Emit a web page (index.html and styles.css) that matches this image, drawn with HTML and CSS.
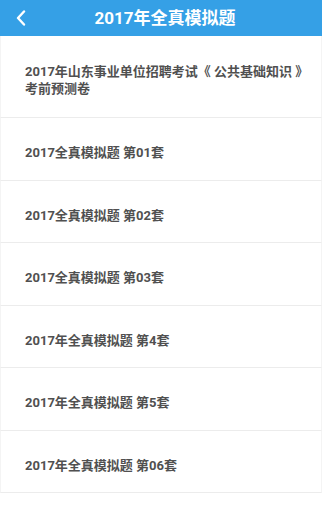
FILE: index.html
```html
<!DOCTYPE html>
<html lang="zh">
<head>
<meta charset="utf-8">
<title>2017年全真模拟题</title>
<link rel="stylesheet" href="styles.css">
</head>
<body>
<header class="topbar">
  <span class="back" aria-label="返回">
    <svg width="10" height="16" viewBox="0 0 10 16"><path d="M8 1.5 L2 8 L8 14.5" fill="none" stroke="#fff" stroke-width="2.4" stroke-linecap="round" stroke-linejoin="round"/></svg>
  </span>
  <h1 class="title">2017年全真模拟题</h1>
</header>
<ul class="list">
  <li class="item item-first">2017年山东事业单位招聘考试《 公共基础知识 》<br>考前预测卷</li>
  <li class="item">2017全真模拟题 第01套</li>
  <li class="item">2017全真模拟题 第02套</li>
  <li class="item">2017全真模拟题 第03套</li>
  <li class="item">2017年全真模拟题 第4套</li>
  <li class="item">2017年全真模拟题 第5套</li>
  <li class="item">2017年全真模拟题 第06套</li>
</ul>
</body>
</html>
```
FILE: styles.css
```css
html, body {
  margin: 0;
  padding: 0;
  background: #ffffff;
  font-family: Roboto, "Noto Sans CJK SC", sans-serif;
}
.topbar {
  height: 36px;
  background: #35a0e6;
  display: flex;
  align-items: center;
  justify-content: center;
  position: relative;
}
.back {
  position: absolute;
  left: 16px;
  top: 10px;
  display: flex;
}
.title {
  margin: 0 0 0 8px;
  color: #ffffff;
  font-size: 17px;
  font-weight: 700;
  line-height: 36px;
}
.list {
  list-style: none;
  margin: 0;
  padding: 0;
}
.item {
  padding: 27px 20px 18px 24px;
  font-size: 13px;
  font-weight: 700;
  color: #505050;
  line-height: 16.5px;
  border-bottom: 1px solid #ececec;
  border-left: 1px solid #f4f4f4;
  border-right: 1px solid #f4f4f4;
}
.item-first {
  white-space: nowrap;
  padding-right: 0;
  line-height: 17px;
  padding-top: 27px;
  padding-bottom: 20px;
}
```
